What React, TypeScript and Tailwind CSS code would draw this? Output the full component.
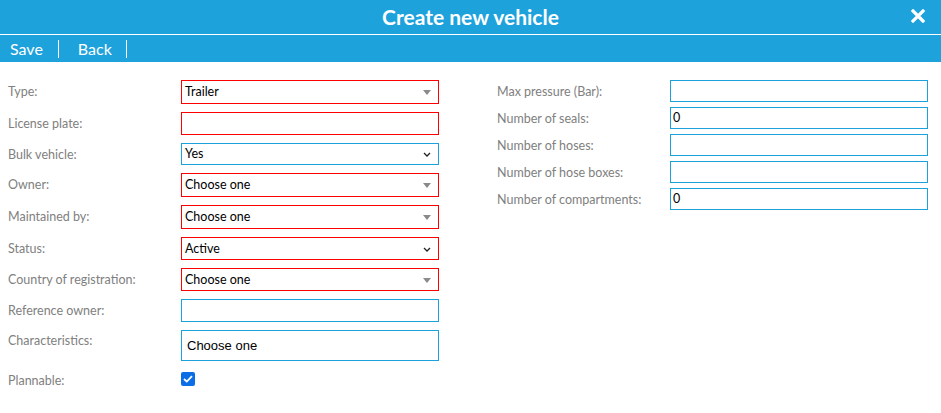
import React from "react";

const FONT = { fontFamily: "Lato, 'Open Sans', sans-serif" };

function Tri() {
  return (
    <svg width="8" height="5" viewBox="0 0 8 5" className="shrink-0">
      <path d="M0 0H8L4 5Z" fill="#8a8a8a" />
    </svg>
  );
}
function Chev() {
  return (
    <svg width="8" height="5" viewBox="0 0 8 5" className="shrink-0">
      <path d="M1 1L4 4L7 1" fill="none" stroke="#222" strokeWidth="1.3" />
    </svg>
  );
}

type Row = {
  label: string;
  h: string;
  border: "red" | "blue";
  value?: string;
  icon?: "tri" | "chev";
};

const left: Row[] = [
  { label: "Type:", h: "h-[24px]", border: "red", value: "Trailer", icon: "tri" },
  { label: "License plate:", h: "h-[23px]", border: "red" },
  { label: "Bulk vehicle:", h: "h-[22px]", border: "blue", value: "Yes", icon: "chev" },
  { label: "Owner:", h: "h-[24px]", border: "red", value: "Choose one", icon: "tri" },
  { label: "Maintained by:", h: "h-[24px]", border: "red", value: "Choose one", icon: "tri" },
  { label: "Status:", h: "h-[23px]", border: "red", value: "Active", icon: "chev" },
  { label: "Country of registration:", h: "h-[23px]", border: "red", value: "Choose one", icon: "tri" },
  { label: "Reference owner:", h: "h-[23px]", border: "blue" },
];

const right = [
  { label: "Max pressure (Bar):", value: "" },
  { label: "Number of seals:", value: "0" },
  { label: "Number of hoses:", value: "" },
  { label: "Number of hose boxes:", value: "" },
  { label: "Number of compartments:", value: "0" },
];

export default function App() {
  return (
    <div className="w-[941px] h-[413px] bg-white overflow-hidden" style={FONT}>
      <div className="h-[35px] bg-[#1ea2dc] border-b border-white flex items-center relative">
        <div className="flex-1 text-center text-white font-bold text-[21px] leading-none pb-[1px]">
          Create new vehicle
        </div>
        <svg
          className="absolute right-[16px] top-[9px]"
          width="14"
          height="14"
          viewBox="0 0 14 14"
        >
          <path d="M2 2L12 12M12 2L2 12" stroke="white" strokeWidth="3.2" strokeLinecap="square" />
        </svg>
      </div>
      <div className="h-[27px] bg-[#1ea2dc] flex items-center text-white text-[16px]">
        <span className="pl-[10px] pr-[15px]">Save</span>
        <span className="w-px h-[18px] bg-white"></span>
        <span className="pl-[19px] pr-[14px]">Back</span>
        <span className="w-px h-[18px] bg-white"></span>
      </div>

      <div className="flex pt-[18px]">
        <div className="pl-[8px] w-[497px] flex flex-col gap-[8px]">
          {left.map((r) => (
            <div key={r.label} className="flex items-start">
              <div className="w-[173px] text-[12.5px] leading-[16px] text-[#808080] pt-[4px]">{r.label}</div>
              <div
                className={`w-[258px] ${r.h} border ${
                  r.border === "red" ? "border-[#ff0000]" : "border-[#1ba1dc]"
                } flex items-center pl-[3px] pr-[7px] pt-[1px]`}
              >
                <span className="flex-1 text-[12.5px] text-black leading-none">{r.value ?? ""}</span>
                {r.icon === "tri" && <Tri />}
                {r.icon === "chev" && <Chev />}
              </div>
            </div>
          ))}
          <div className="flex items-start">
            <div className="w-[173px] text-[12.5px] leading-[16px] text-[#808080] pt-[3px]">Characteristics:</div>
            <div className="w-[258px] h-[31px] border border-[#1ba1dc] flex items-center pl-[5px]">
              <span className="text-[13px] text-black" style={{ fontFamily: "'Liberation Sans', Arial, sans-serif" }}>
                Choose one
              </span>
            </div>
          </div>
          <div className="flex items-start mt-[3px]">
            <div className="w-[173px] text-[12.5px] leading-[16px] text-[#808080] pt-[1px]">Plannable:</div>
            <div className="w-[14px] h-[14px] rounded-[2px] bg-[#0b6ee6] flex items-center justify-center">
              <svg width="10" height="8" viewBox="0 0 10 8">
                <path d="M1 4L3.8 6.6L9 1.2" fill="none" stroke="white" strokeWidth="1.8" />
              </svg>
            </div>
          </div>
        </div>
        <div className="flex flex-col gap-[5px]">
          {right.map((r) => (
            <div key={r.label} className="flex items-start">
              <div className="w-[173px] text-[12.5px] leading-[16px] text-[#808080] pt-[4px]">{r.label}</div>
              <div className="w-[258px] h-[22px] border border-[#1ba1dc] flex items-center pl-[2px] pt-[1px]">
                <span className="text-[12.5px] text-black leading-none">{r.value}</span>
              </div>
            </div>
          ))}
        </div>
      </div>
    </div>
  );
}
